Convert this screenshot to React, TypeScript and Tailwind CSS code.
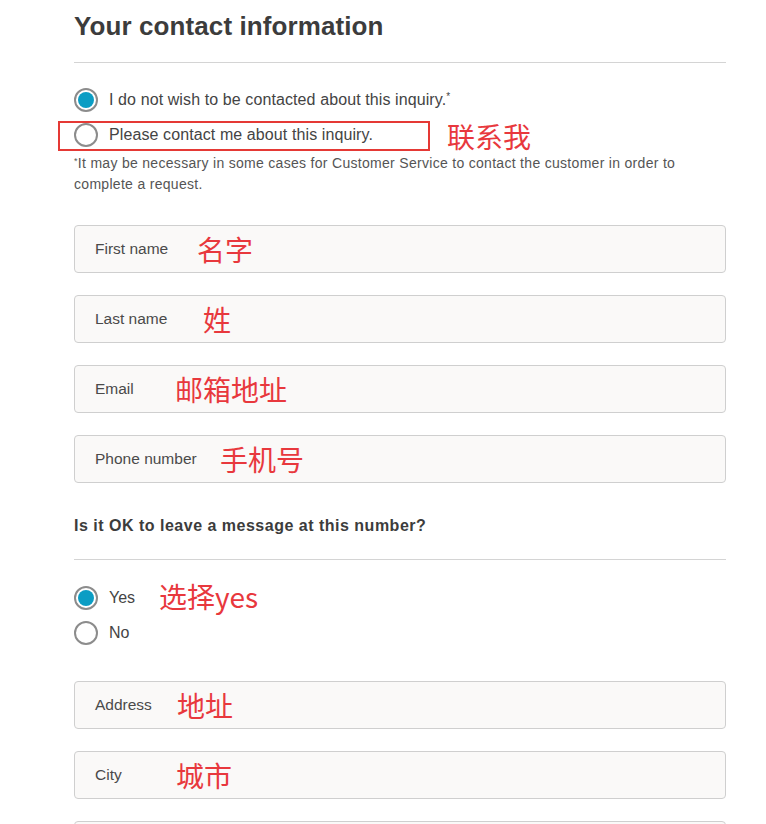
const sans = "font-['Liberation_Sans','Noto_Sans_CJK_SC',sans-serif]";
const cjk = "font-['Noto_Sans_CJK_SC','Liberation_Sans',sans-serif]";

function Radio({ checked }: { checked?: boolean }) {
  return (
    <span className="flex h-6 w-6 shrink-0 items-center justify-center rounded-full border-2 border-[#8c8c8c] bg-white">
      {checked && <span className="h-[16px] w-[16px] rounded-full bg-[#0b9dc4]" />}
    </span>
  );
}

function Note({ text, className }: { text: string; className?: string }) {
  return <span className={`${cjk} text-[28px] leading-none text-[#e8383d] ${className ?? ""}`}>{text}</span>;
}

function Field({ label, note, labelW }: { label: string; note: string; labelW: string }) {
  return (
    <div className="flex h-12 items-center rounded-[4px] border border-[#cfcfcf] bg-[#faf9f8] pl-[20px]">
      <span className={`${labelW} text-[15.5px] text-[#4a4a4a]`}>{label}</span>
      {note && <Note text={note} />}
    </div>
  );
}

export default function App() {
  return (
    <div className={`${sans} h-[824px] overflow-hidden bg-white text-[#3a3a3a]`}>
      <div className="ml-[74px] w-[652px] pb-10">
        <h2 className="mt-[10px] text-[26px] font-bold leading-[32px] tracking-[0.1px] text-[#3c3c3c]">Your contact information</h2>
        <div className="mt-[20px] border-t border-[#d4d4d4]" />

        <div className="mt-[25px] flex flex-col gap-[11px]">
          <div className="flex items-center gap-[11px]">
            <Radio checked />
            <span className="text-[16px] tracking-[0.1px] text-[#444]">
              I do not wish to be contacted about this inquiry.<sup className="text-[10px]">*</sup>
            </span>
          </div>
          <div className="relative flex items-center gap-[11px]">
            <Radio />
            <span className="text-[16px] tracking-[0.1px] text-[#444]">Please contact me about this inquiry.</span>
            <div className="absolute left-[-16px] top-[-2px] h-[30px] w-[372px] border-2 border-[#e53935]" />
            <Note text="联系我" className="absolute left-[373px] top-[-1px]" />
          </div>
        </div>

        <p className="mt-[6px] text-[14px] leading-[21px] tracking-[0.3px] text-[#555]">
          <sup className="text-[9px]">*</sup>It may be necessary in some cases for Customer Service to contact the customer in order to
          <br />
          complete a request.
        </p>

        <div className="mt-[30px] flex flex-col gap-[22px]">
          <Field label="First name" note="名字" labelW="w-[102px]" />
          <Field label="Last name" note="姓" labelW="w-[108px]" />
          <Field label="Email" note="邮箱地址" labelW="w-[80px]" />
          <Field label="Phone number" note="手机号" labelW="w-[125px]" />
        </div>

        <p className="mt-[33px] text-[16px] font-bold leading-[20px] tracking-[0.5px] text-[#3c3c3c]">Is it OK to leave a message at this number?</p>
        <div className="mt-[23px] border-t border-[#d4d4d4]" />

        <div className="mt-[26px] flex flex-col gap-[11px]">
          <div className="flex items-center">
            <Radio checked />
            <span className="ml-[11px] w-[50px] text-[16px] text-[#444]">Yes</span>
            <Note text="选择yes" className="-mt-1" />
          </div>
          <div className="flex items-center gap-[11px]">
            <Radio />
            <span className="text-[16px] text-[#444]">No</span>
          </div>
        </div>

        <div className="mt-[36px] flex flex-col gap-[22px]">
          <Field label="Address" note="地址" labelW="w-[82px]" />
          <Field label="City" note="城市" labelW="w-[81px]" />
          <Field label="" note="" labelW="w-[82px]" />
        </div>
      </div>
    </div>
  );
}
